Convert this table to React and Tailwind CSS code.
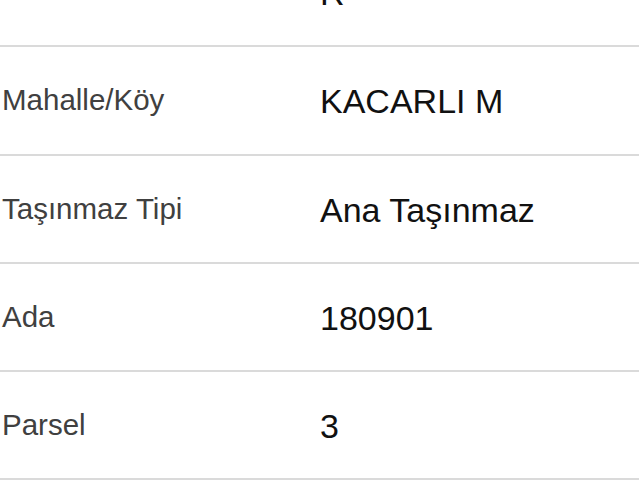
import React from "react";

const rows = [
  { label: "", value: "R" },
  { label: "Mahalle/Köy", value: "KACARLI M" },
  { label: "Taşınmaz Tipi", value: "Ana Taşınmaz" },
  { label: "Ada", value: "180901" },
  { label: "Parsel", value: "3" },
];

export default function App() {
  return (
    <div
      className="w-[639px] h-[480px] overflow-hidden bg-white"
      style={{ fontFamily: '"Liberation Sans", Arial, sans-serif' }}
    >
      <div className="-mt-[61px]">
        {rows.map((r, i) => (
          <div
            key={i}
            className="h-[108.25px] flex items-start pt-[37px] border-b-2 border-[#dadada]"
          >
            <div className="w-[320px] pl-[2px] pt-[1px] text-[29.5px] leading-[29.5px] text-[#404040]">
              {r.label}
            </div>
            <div className="text-[34px] leading-[34px] text-[#111]">
              {r.value}
            </div>
          </div>
        ))}
      </div>
    </div>
  );
}
